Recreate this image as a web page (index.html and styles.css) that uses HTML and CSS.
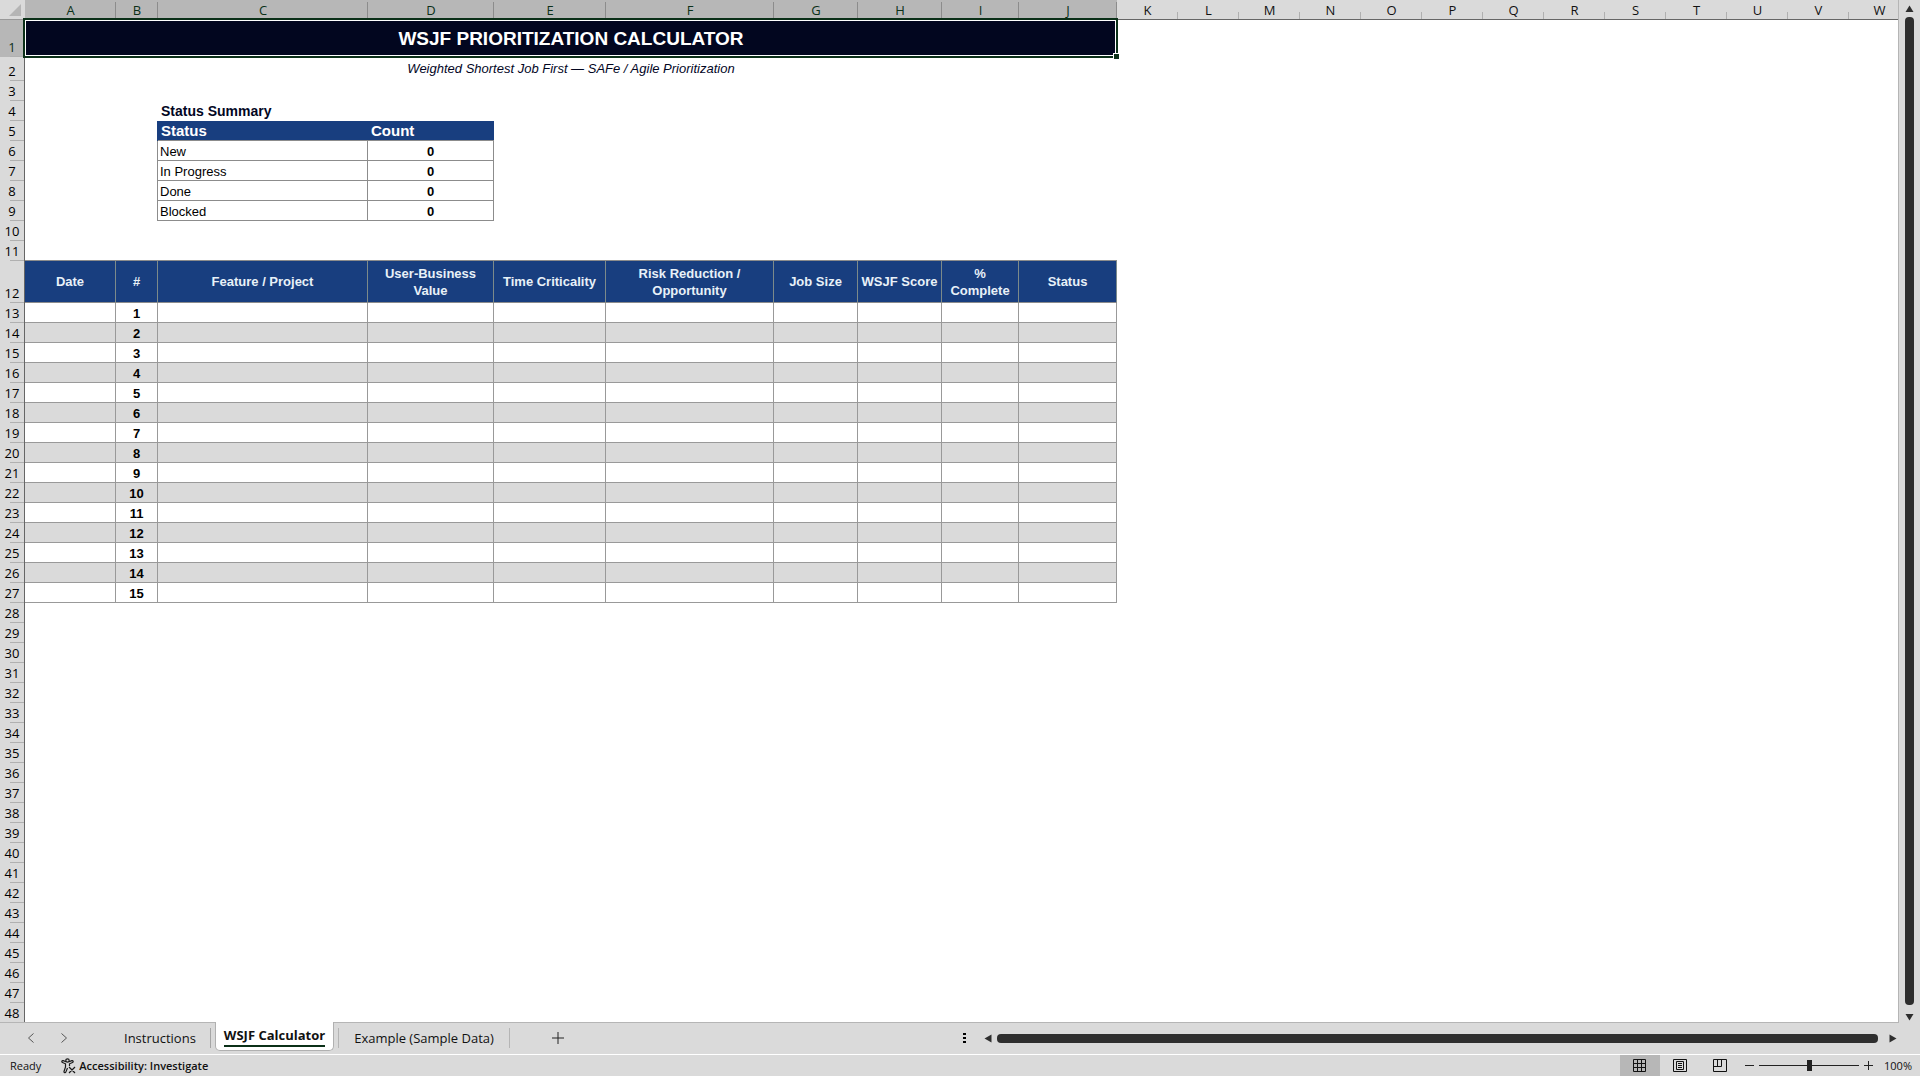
FILE: index.html
```html
<!DOCTYPE html>
<html lang="en">
<head>
    <meta charset="UTF-8">
    <meta name="viewport" content="width=device-width, initial-scale=1.0">
    <title>WSJF Prioritization Calculator</title>
    <link rel="stylesheet" href="styles.css">
</head>
<body>
    <main class="workbook">
        <div class="sheet">
            <table class="grid">
                <colgroup>
                    <col class="col-head">
                    <col class="col-a">
                    <col class="col-b">
                    <col class="col-c">
                    <col class="col-d">
                    <col class="col-e">
                    <col class="col-f">
                    <col class="col-g">
                    <col class="col-h">
                    <col class="col-i">
                    <col class="col-j">
                    <col class="col-rest" span="13">
                </colgroup>
                <thead>
                    <tr id="letters">
                        <th class="corner"><svg width="12" height="12" viewBox="0 0 12 12"><path d="M12 0v12H0z" fill="#b5b5b5"/></svg></th>
                    </tr>
                </thead>
                <tbody id="rows">
                    <tr class="row-title">
                        <th class="row-no active">1</th>
                        <td class="title selected" colspan="10">WSJF PRIORITIZATION CALCULATOR<span class="handle"></span></td>
                    </tr>
                    <tr class="row-subtitle">
                        <th class="row-no">2</th>
                        <td class="subtitle" colspan="10">Weighted Shortest Job First — SAFe / Agile Prioritization</td>
                    </tr>
                    <tr><th class="row-no">3</th></tr>
                    <tr>
                        <th class="row-no">4</th>
                        <td colspan="2"></td>
                        <td class="summary-title" colspan="2">Status Summary</td>
                    </tr>
                    <tr>
                        <th class="row-no">5</th>
                        <td class="before-head" colspan="2"></td>
                        <td class="summary-head">Status</td>
                        <td class="summary-head">Count</td>
                    </tr>
                    <tr>
                        <th class="row-no">6</th>
                        <td class="before-box" colspan="2"></td>
                        <td class="box">New</td>
                        <td class="box count">0</td>
                    </tr>
                    <tr>
                        <th class="row-no">7</th>
                        <td class="before-box" colspan="2"></td>
                        <td class="box">In Progress</td>
                        <td class="box count">0</td>
                    </tr>
                    <tr>
                        <th class="row-no">8</th>
                        <td class="before-box" colspan="2"></td>
                        <td class="box">Done</td>
                        <td class="box count">0</td>
                    </tr>
                    <tr>
                        <th class="row-no">9</th>
                        <td class="before-box" colspan="2"></td>
                        <td class="box">Blocked</td>
                        <td class="box count">0</td>
                    </tr>
                    <tr><th class="row-no">10</th></tr>
                    <tr>
                        <th class="row-no">11</th>
                        <td class="above-table" colspan="10"></td>
                    </tr>
                    <tr class="row-head">
                        <th class="row-no">12</th>
                        <th class="head">Date</th>
                        <th class="head">#</th>
                        <th class="head">Feature / Project</th>
                        <th class="head">User-Business Value</th>
                        <th class="head">Time Criticality</th>
                        <th class="head">Risk Reduction / Opportunity</th>
                        <th class="head">Job Size</th>
                        <th class="head">WSJF Score</th>
                        <th class="head">%<br>Complete</th>
                        <th class="head">Status</th>
                    </tr>
                </tbody>
            </table>
        </div>
        <div class="scroll-v">
            <button class="arrow" aria-label="Scroll up"><svg width="9" height="8" viewBox="0 0 9 8"><path d="M4.500 .5L8.500 7H.5z"/></svg></button>
            <div class="bar"></div>
            <button class="arrow" aria-label="Scroll down"><svg width="9" height="8" viewBox="0 0 9 8"><path d="M.5 1h8l-4 6.500z"/></svg></button>
        </div>
    </main>

    <div class="tab-bar">
        <div class="tab-nav">
            <button aria-label="Previous sheet"><svg width="8" height="10" viewBox="0 0 8 10"><path d="M6.500 .5L1.500 5l5 4.500"/></svg></button>
            <button aria-label="Next sheet"><svg width="8" height="10" viewBox="0 0 8 10"><path d="M1.500 .5L6.500 5l-5 4.500"/></svg></button>
        </div>
        <nav class="tabs">
            <a class="tab first" href="#instructions">Instructions</a>
            <a class="tab current" href="#calculator"><span>WSJF Calculator</span></a>
            <a class="tab example" href="#example">Example (Sample Data)</a>
        </nav>
        <button class="add-sheet" aria-label="New sheet"><svg width="12" height="12" viewBox="0 0 12 12"><path d="M6 0v12M0 6h12"/></svg></button>
        <div class="scroll-h">
            <svg class="dots" width="3" height="11" viewBox="0 0 3 11"><path d="M0 0h3v2H0zM0 4h3v2H0zM0 8h3v2H0z"/></svg>
            <button class="arrow" aria-label="Scroll left"><svg width="8" height="9" viewBox="0 0 8 9"><path d="M.5 4.500L7.500 .5v8z"/></svg></button>
            <div class="bar"></div>
            <button class="arrow" aria-label="Scroll right"><svg width="8" height="9" viewBox="0 0 8 9"><path d="M7.500 4.500L.5 .5v8z"/></svg></button>
        </div>
    </div>

    <footer class="status-bar">
        <span class="ready">Ready</span>
        <button class="access">
            <svg width="15" height="16" viewBox="0 0 15 16" fill="none" stroke="#1a1a1a" stroke-width="1.200">
                <circle cx="6.500" cy="2.500" r="1.700"/>
                <path d="M5 3.800L2.200 2.600C.8 2.200.4 4 1.500 4.500L4.500 5.800V9L3 13.500c-.2 1.300 1.400 1.600 1.800.6L6.500 10M8 3.800l2.800-1.200c1.400-.4 1.800 1.400.7 1.900L8.500 5.800V8M8 9l6 6M14 9l-6 6"/>
            </svg>
            Accessibility: Investigate
        </button>
        <div class="views">
            <button class="view on" aria-label="Normal">
                <svg width="14" height="14" viewBox="0 0 14 14"><path d="M.5 .5h12v12H.5zM.5 4.500h12M.5 8.500h12M4.500 .5v12M8.500 .5v12"/></svg>
            </button>
            <button class="view" aria-label="Page layout">
                <svg width="14" height="14" viewBox="0 0 14 14"><path d="M.5 .5h13v12H.5zM3.500 2.500h7v8h-7zM5 4.500h4M5 6.500h4M5 8.500h4"/></svg>
            </button>
            <button class="view" aria-label="Page break preview">
                <svg width="14" height="14" viewBox="0 0 14 14"><path d="M.5 .5h13v12H.5zM.5 7.500h8M4.500 .5v7M8.500 .5v7"/></svg>
            </button>
        </div>
        <button class="zoom-btn" aria-label="Zoom out"><svg width="9" height="9" viewBox="0 0 9 9"><path d="M0 4.500h9"/></svg></button>
        <input class="zoom" type="range" min="0" max="100" value="50" aria-label="Zoom">
        <button class="zoom-btn" aria-label="Zoom in"><svg width="9" height="9" viewBox="0 0 9 9"><path d="M0 4.500h9M4.500 0v9"/></svg></button>
        <span class="percent">100%</span>
    </footer>

    <script>
        const letters = document.getElementById("letters");
        const rows = document.getElementById("rows");

        // column letters, A to J are covered by the selection
        "ABCDEFGHIJKLMNOPQRSTUVW".split("").forEach((letter, i) => {
            const th = document.createElement("th");
            th.className = i < 10 ? "letter active" : "letter";
            th.textContent = letter;
            letters.appendChild(th);
        });

        // rows 13 to 27 hold the 15 items, the rest are blank
        for (let n = 13; n <= 48; n++) {
            const tr = document.createElement("tr");
            let html = `<th class="row-no">${n}</th>`;
            if (n <= 27) {
                tr.className = n % 2 === 0 ? "item shaded" : "item";
                html += `<td></td><td class="num">${n - 12}</td>` + "<td></td>".repeat(8);
            }
            tr.innerHTML = html;
            rows.appendChild(tr);
        }
    </script>
</body>
</html>
```
FILE: styles.css
```css
* {
    box-sizing: border-box;
}

body {
    margin: 0;
    height: 100vh;
    display: flex;
    flex-direction: column;
    overflow: hidden;
    background: #dadada;
    color: #111;
    font-family: "Open Sans", "Noto Sans", sans-serif;
    font-size: 13px;
}

button {
    padding: 0;
    border: 0;
    background: none;
    color: inherit;
    font: inherit;
    display: flex;
    align-items: center;
    justify-content: center;
}

svg {
    display: block;
}

/* Sheet */
.workbook {
    flex: 1;
    min-height: 0;
    display: flex;
}

.sheet {
    flex: 1;
    min-width: 0;
    overflow: hidden;
    background: #fff;
    border-right: 1px solid #b5b5b5;
    border-bottom: 1px solid #b5b5b5;
}

.grid {
    table-layout: fixed;
    width: 1910px;
    border-collapse: separate;
    border-spacing: 0;
}

.col-head { width: 25px; }
.col-a { width: 91px; }
.col-b { width: 42px; }
.col-c { width: 210px; }
.col-d { width: 126px; }
.col-e { width: 112px; }
.col-f { width: 168px; }
.col-g { width: 84px; }
.col-h { width: 84px; }
.col-i { width: 77px; }
.col-j { width: 98px; }
.col-rest { width: 61px; }

.grid tr {
    height: 20px;
}

.grid th,
.grid td {
    padding: 0;
    line-height: 17px;
}

.grid td {
    font-family: "Liberation Sans", Arial, sans-serif;
    font-size: 13px;
    color: #000;
}

.grid .corner {
    background: #dadada;
    border-bottom: 1px solid #999;
}

.corner svg {
    margin-left: 9px;
}

.grid .letter {
    font-weight: 500;
    padding-top: 2px;
    background: linear-gradient(#b0b0b0, #b0b0b0) right bottom / 1px 7px no-repeat #dadada;
    border-bottom: 1px solid #666;
}

.grid .letter.active {
    color: #0b3018;
    background: linear-gradient(#8c8c8c, #8c8c8c) right bottom / 1px 17px no-repeat #b7b7b7;
}

.grid .row-no {
    color: #000;
    font-weight: 500;
    padding-bottom: 1px;
    vertical-align: bottom;
    background: linear-gradient(#b0b0b0, #b0b0b0) right bottom / 14px 1px no-repeat #dadada;
    border-right: 1px solid #666;
}

.grid .row-no.active {
    color: #0b3018;
    background-color: #b7b7b7;
}

.grid .row-title {
    height: 37px;
}

.grid .row-subtitle {
    height: 24px;
}

.grid .row-head {
    height: 42px;
}

.grid .title {
    position: relative;
    background: #02061f;
    color: #fff;
    font-size: 19px;
    font-weight: bold;
    text-align: center;
}

/* selection frame */
.selected::after {
    content: "";
    position: absolute;
    inset: -2px -1px -1px -2px;
    border: 2px solid #0b3018;
    box-shadow: inset 0 0 0 1px #fff;
}

.handle {
    position: absolute;
    z-index: 1;
    right: -2px;
    bottom: -2px;
    width: 6px;
    height: 6px;
    background: #0b3018;
    border-top: 1px solid #fff;
    border-left: 1px solid #fff;
}

.grid .subtitle {
    color: #02061f;
    font-style: italic;
    text-align: center;
    padding-bottom: 2px;
}

.grid .summary-title {
    color: #02061f;
    font-size: 14px;
    font-weight: bold;
    padding-left: 3px;
}

.grid .summary-head {
    background: #183e7f;
    color: #fff;
    font-size: 15px;
    font-weight: bold;
    padding-left: 3px;
    border-bottom: 1px solid #8c8c8c;
}

.before-head {
    border-right: 1px solid #183e7f;
}

.before-box {
    border-right: 1px solid #8c8c8c;
}

.grid .box {
    padding: 2px 0 0 2px;
    border-right: 1px solid #8c8c8c;
    border-bottom: 1px solid #8c8c8c;
}

.grid .count {
    padding-left: 0;
    text-align: center;
    font-weight: bold;
}

.above-table {
    border-bottom: 1px solid #8c8c8c;
}

.head {
    background: #183e7f;
    color: #e8f1f8;
    font-family: "Liberation Sans", Arial, sans-serif;
    font-size: 13px;
    font-weight: bold;
    border-right: 1px solid #7c8a8a;
    border-bottom: 1px solid #8c8c8c;
}

.item td {
    border-right: 1px solid #999;
    border-bottom: 1px solid #999;
}

.item.shaded td {
    background: #dadada;
}

.grid .item .num {
    padding-top: 2px;
    font-weight: bold;
    text-align: center;
}

/* Scroll bars */
.scroll-v {
    width: 21px;
    padding: 5px 0 2px;
    display: flex;
    flex-direction: column;
    align-items: center;
    gap: 4px;
}

.scroll-v .bar {
    flex: 1;
    width: 9px;
    margin-bottom: 4px;
}

.bar {
    background: #2e2e2e;
    border-radius: 4px;
}

.arrow {
    fill: #2e2e2e;
}

/* Sheet tabs */
.tab-bar {
    height: 31px;
    padding-bottom: 1px;
    display: flex;
    align-items: center;
}

.tab-nav {
    width: 100px;
    padding-left: 27px;
    display: flex;
    gap: 25px;
    fill: none;
    stroke: #555;
    stroke-width: 1px;
}

.tabs {
    display: flex;
    align-items: center;
    height: 30px;
}

.tab {
    color: #111;
    text-decoration: none;
    line-height: 20px;
}

.first {
    padding: 0 14px 0 24px;
    border-right: 1px solid #a5a5a5;
}

.current {
    align-self: flex-start;
    margin: -1px 4px 0 4px;
    padding: 3px 8px 3px;
    position: relative;
    background: #fff;
    border: 1px solid #b0b0b0;
    border-top: 0;
    border-radius: 0 0 5px 5px;
    font-weight: bold;
}

.current span {
    display: block;
    border-bottom: 2px solid #0b3018;
}

.example {
    padding: 0 15px;
    border-left: 1px solid #b5b5b5;
    border-right: 1px solid #b5b5b5;
}

.add-sheet {
    margin-left: 42px;
    stroke: #222;
}

.scroll-h {
    width: 50%;
    margin-left: auto;
    padding: 0 23px 0 3px;
    display: flex;
    align-items: center;
}

.scroll-h .dots {
    margin-right: 18px;
}

.scroll-h .bar {
    flex: 1;
    height: 9px;
    margin: 0 11px 0 5px;
}

/* Status bar */
.status-bar {
    height: 22px;
    border-top: 1px solid #fff;
    display: flex;
    align-items: center;
    font-size: 11px;
}

.ready {
    padding-left: 10px;
}

.access {
    margin-left: 20px;
    gap: 3px;
    font-weight: 600;
}

.views {
    margin-left: auto;
    display: flex;
    align-self: stretch;
}

.view {
    width: 40px;
    fill: none;
    stroke: #111;
}

.view.on {
    background: #b7b7b7;
}

.zoom-btn {
    stroke: #222;
}

.views + .zoom-btn {
    margin-left: 5px;
}

.zoom {
    appearance: none;
    width: 100px;
    height: 12px;
    margin: 0 5px;
    background: linear-gradient(#222, #222) center / 100% 1px no-repeat;
}

.zoom::-webkit-slider-thumb {
    appearance: none;
    width: 5px;
    height: 11px;
    background: #222;
}

.percent {
    width: 47px;
    padding-right: 8px;
    text-align: right;
}
```
